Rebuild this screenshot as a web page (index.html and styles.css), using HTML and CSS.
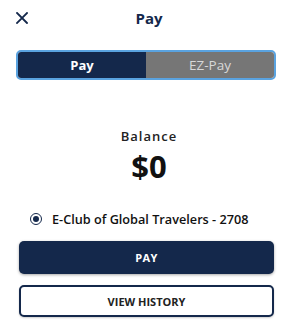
FILE: index.html
```html
<!DOCTYPE html>
<html>
<head>
<meta charset="utf-8">
<link rel="stylesheet" href="styles.css">
</head>
<body>
<div class="screen">
  <header class="topbar">
    <button class="close" aria-label="Close">
      <svg width="12" height="12" viewBox="0 0 12 12"><path d="M1 1L11 11M11 1L1 11" stroke="#14284b" stroke-width="1.8" stroke-linecap="square"/></svg>
    </button>
    <h1 class="title">Pay</h1>
  </header>
  <div class="segment">
    <div class="seg seg-active">Pay</div>
    <div class="seg seg-inactive">EZ-Pay</div>
  </div>
  <section class="balance">
    <div class="balance-label">Balance</div>
    <div class="balance-amount">$0</div>
  </section>
  <label class="account">
    <span class="radio"><span class="radio-dot"></span></span>
    <span class="account-name">E-Club of Global Travelers - 2708</span>
  </label>
  <div class="actions">
    <button class="btn btn-primary">PAY</button>
    <button class="btn btn-outline">VIEW HISTORY</button>
  </div>
</div>
</body>
</html>
```
FILE: styles.css
```css
* { box-sizing: border-box; }
html, body { margin: 0; padding: 0; background: #fff; }
body { font-family: "Open Sans", "Noto Sans", sans-serif; color: #111; }
.screen { width: 298px; height: 326px; display: flex; flex-direction: column; }
.topbar { position: relative; height: 36px; display: flex; align-items: center; justify-content: center; }
.close { position: absolute; left: 16px; top: 12px; width: 12px; height: 12px; padding: 0; border: 0; background: none; display: block; }
.close svg { display: block; }
.title { margin: 0; font-size: 15px; font-weight: 700; color: #14284b; line-height: 20px; }
.segment { margin: 14px 22px 0 16px; height: 30px; border: 2px solid #5aa3e0; border-radius: 5px; display: flex; overflow: hidden; }
.seg { flex: 1; display: flex; align-items: center; justify-content: center; font-size: 13px; }
.seg-active { background: #14284b; color: #fff; font-weight: 700; }
.seg-inactive { background: #767676; color: #d8d8d8; font-weight: 400; font-size: 13.5px; }
.balance { margin-top: 48px; display: flex; flex-direction: column; align-items: center; }
.balance-label { font-size: 13px; font-weight: 600; letter-spacing: 1px; color: #222; line-height: 16px; }
.balance-amount { font-size: 31px; font-weight: 700; color: #111; line-height: 36px; margin-top: 4px; }
.account { margin: 26px 0 0 30px; display: flex; align-items: center; gap: 10px; }
.radio { width: 12px; height: 12px; border: 1.5px solid #14284b; border-radius: 50%; display: flex; align-items: center; justify-content: center; }
.radio-dot { width: 6px; height: 6px; border-radius: 50%; background: #14284b; }
.account-name { font-size: 12.7px; font-weight: 600; color: #111; line-height: 18px; }
.actions { margin: 13px 24px 0 19px; display: flex; flex-direction: column; gap: 11px; }
.btn { height: 33px; border-radius: 5px; font-family: inherit; font-size: 11px; font-weight: 700; letter-spacing: 0; }
.btn-primary { background: #14284b; color: #fff; border: 0; box-shadow: 0 1px 3px rgba(0,0,0,0.35); letter-spacing: 0.3px; }
.btn-outline { background: #fff; color: #222; border: 2px solid #14284b; height: 32px; box-shadow: 0 1px 2px rgba(0,0,0,0.2); }
```
